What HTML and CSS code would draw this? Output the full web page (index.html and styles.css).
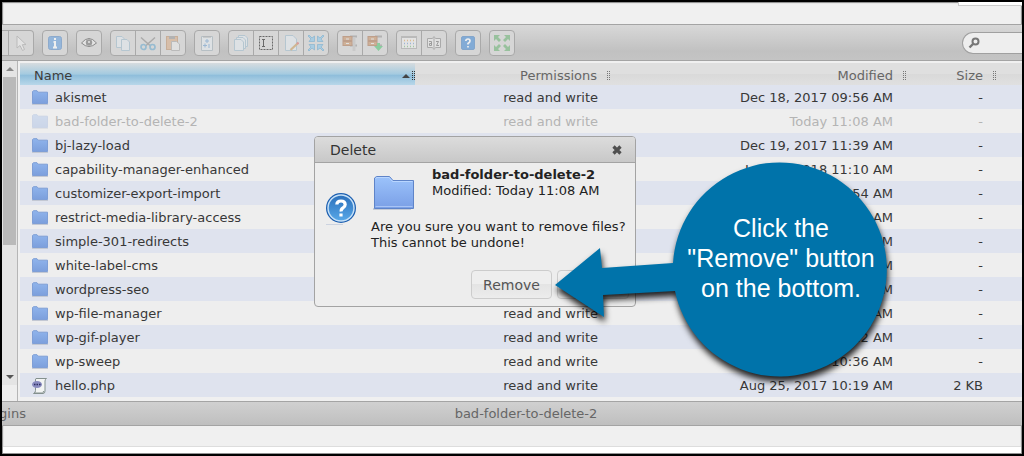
FILE: index.html
```html
<!DOCTYPE html>
<html lang="en">
<head>
<meta charset="utf-8">
<title>File manager</title>
<link rel="stylesheet" href="styles.css">
</head>
<body>
<svg class="defs" width="0" height="0" aria-hidden="true">
  <defs>
    <linearGradient id="fg" x1="0" y1="0" x2="0" y2="1"><stop offset="0" stop-color="#9cc3fb"/><stop offset="1" stop-color="#7a9fe6"/></linearGradient>
    <linearGradient id="sg" x1="0" y1="0" x2="0" y2="1"><stop offset="0" stop-color="#8fb4ec"/><stop offset="1" stop-color="#7c9fdc"/></linearGradient>
    <linearGradient id="bg" x1="0" y1="0" x2="0" y2="1"><stop offset="0" stop-color="#2a6fbb"/><stop offset="1" stop-color="#58a8e8"/></linearGradient>
    <symbol id="folder" viewBox="0 0 16 16"><path d="M.5 13.500V1.500L1.500.700H5L6.200 2.200H15.500V13.500Z" fill="url(#sg)" stroke="#7f9fd6"/><path d="M0 14.500H16" stroke="#c3c8d3"/></symbol>
    <symbol id="arrows" viewBox="0 0 16 16"><path d="M0 0H6L4 2 7 5 5 7 2 4 0 6ZM16 0V6L14 4 11 7 9 5 12 2 10 0ZM0 16V10L2 12 5 9 7 11 4 14 6 16ZM16 16H10L12 14 9 11 11 9 14 12 16 10Z"/></symbol>
  </defs>
</svg>
<div class="frame">
  <header class="topstrip"><span class="tab"></span></header>

  <div class="toolbar">
    <div class="group cut">
      <button class="tool part" aria-label="Previous tool"></button>
      <button class="tool" aria-label="Open"><svg viewBox="0 0 16 16"><path d="M4 1V13L7 10.500 9.500 15.500 11.500 14.500 9.300 9.700 13 9.500Z" fill="#f4f4f4" stroke="#999"/></svg></button>
    </div>
    <div class="group"><button class="tool strong" aria-label="Get info"><svg viewBox="0 0 16 16"><rect x="1.500" y="1.500" width="13" height="13" rx="2" fill="#6aa0dc" stroke="#5c8dc5"/><path d="M8 3V5M6.500 7H8V12M6 12.500H10" stroke="#fff" stroke-width="2" fill="none"/></svg></button></div>
    <div class="group"><button class="tool strong" aria-label="Preview"><svg viewBox="0 0 16 16"><path d="M.5 8Q8-1 15.500 8Q8 15 .5 8Z" fill="#eee" stroke="#555"/><circle cx="8" cy="7.500" r="3.200" fill="#777"/><circle cx="8" cy="7" r="1" fill="#eee"/></svg></button></div>
    <div class="group">
      <button class="tool" aria-label="Copy"><svg viewBox="0 0 16 16"><path d="M1.500 1.500H7L9.500 4V12.500H1.500Z" fill="#e6f0f7" stroke="#8fb3cb"/><path d="M6.500 4.500H12L14.500 7V15.500H6.500Z" fill="#e6f0f7" stroke="#8fb3cb"/></svg></button>
      <button class="tool" aria-label="Cut"><svg viewBox="0 0 16 16" fill="none"><path d="M1 2.500 10.500 11M15 2.500 5.500 11" stroke="#777" stroke-width="1.500"/><circle cx="3.500" cy="12" r="2.500" stroke="#4b9ccb" stroke-width="1.700"/><circle cx="12.500" cy="12" r="2.500" stroke="#4b9ccb" stroke-width="1.700"/></svg></button>
      <button class="tool" aria-label="Paste"><svg viewBox="0 0 16 16"><rect x="1.500" y="1.500" width="11" height="13" fill="#d9a273" stroke="#b97f4e"/><path d="M4 2.500H10" stroke="#888" stroke-width="3"/><path d="M6.500 6.500H11.500L14.500 9V15.500H6.500Z" fill="#eee" stroke="#999"/></svg></button>
    </div>
    <div class="group"><button class="tool" aria-label="Duplicate"><svg viewBox="0 0 16 16"><path d="M2.500 1.500H13.500V15.500H2.500Z" fill="#e6f0f7" stroke="#91a4b0"/><path d="M4 2H12" stroke="#888"/><path d="M8 4V8M6 6H10M6 8.500V12.500M4 10.500H8M10 9V13" stroke="#5694d2" fill="none"/></svg></button></div>
    <div class="group">
      <button class="tool" aria-label="Select all"><svg viewBox="0 0 16 16" fill="#e6f0f7" stroke="#8fb3cb"><path d="M5.500.500H12L14.500 3V11.500H5.500Z"/><path d="M3.500 2.500H10L12.500 5V13.500H3.500Z"/><path d="M1.500 4.500H8L10.500 7V15.500H1.500Z"/></svg></button>
      <button class="tool strong" aria-label="Rename"><svg viewBox="0 0 16 16" fill="none" stroke="#222"><rect x="1.500" y="1.500" width="13" height="13" stroke-dasharray="2 1"/><path d="M4 4.500H7M4 11.500H7M5.500 4.500V11.500"/></svg></button>
      <button class="tool" aria-label="Edit file"><svg viewBox="0 0 16 16"><path d="M2.500.500H10L13.500 4V15.500H2.500Z" fill="#e6f0f7" stroke="#8fb3cb"/><path d="M7.500 15 15 8" stroke="#c9913f" stroke-width="2.200"/><path d="M14 9 15.500 7.500" stroke="#d55" stroke-width="2.200"/></svg></button>
      <button class="tool strong" aria-label="Resize"><svg viewBox="0 0 16 16" fill="#8cc6ea" stroke="#4595c8" stroke-width=".6"><path d="M1 0 4 3 6.500 1V6.500H1L3 4 0 1ZM15 0 12 3 9.500 1V6.500H15L13 4 16 1ZM1 16 4 13 6.500 15V9.500H1L3 12 0 15ZM15 16 12 13 9.500 15V9.500H15L13 12 16 15Z"/></svg></button>
    </div>
    <div class="group">
      <button class="tool" aria-label="Extract"><svg viewBox="0 0 16 16"><path d="M8 1.500H15M8 10.500H15" stroke="#888" stroke-width="2"/><path d="M12 2V16" stroke="#bbb" stroke-width="3"/><rect x="1" y="1.500" width="9" height="4" fill="#c6844c" stroke="#a25d31"/><rect x="1" y="6.500" width="9" height="4" fill="#c6844c" stroke="#a25d31"/><path d="M4 4H7M4 8.500H7" stroke="#eee"/></svg></button>
      <button class="tool" aria-label="Archive"><svg viewBox="0 0 16 16"><path d="M8 1.500H15M8 10.500H15" stroke="#888" stroke-width="2"/><rect x="1" y="1.500" width="9" height="4" fill="#c6844c" stroke="#a25d31"/><rect x="1" y="6.500" width="9" height="4" fill="#c6844c" stroke="#a25d31"/><path d="M4 4H7M4 8.500H7" stroke="#eee"/><path d="M10 8H13V11H16L11.500 16 7 11H10Z" fill="#2fc05c"/></svg></button>
    </div>
    <div class="group">
      <button class="tool" aria-label="Icons view"><svg viewBox="0 0 16 16"><rect x=".5" y="1.500" width="15" height="12" fill="#f4f4f4" stroke="#999"/><path d="M1 2.500H15" stroke="#999"/><g fill="none" stroke-dasharray="1 2" stroke-width="1.300"><path d="M3 5.500H14" stroke="#e0993e"/><path d="M3 8.500H14" stroke="#5b8ed0"/><path d="M3 11.500H14" stroke="#64b564"/></g></svg></button>
      <button class="tool" aria-label="Sort"><svg viewBox="0 0 16 16"><path d="M1.500 3.500H6.500L8 1.500 9.500 3.500H14.500V12.500H9.500L8 14.500 6.500 12.500H1.500Z" fill="#eee" stroke="#777"/><path d="M8 3V13" stroke="#777"/><path d="M3 6.500H5.500V10.500H3.500V8.500H5.500M10 6.500H12.500L10.500 10.500H13" fill="none" stroke="#555"/></svg></button>
    </div>
    <div class="group"><button class="tool strong" aria-label="Help"><svg viewBox="0 0 16 16"><rect x="1.500" y="1.500" width="13" height="13" rx="1.500" fill="#4b8fd6" stroke="#4f87c4"/><path d="M5.800 6Q6 4 8 4T10 6Q10 7.300 8 8.500V9.500M8 11V12.500" fill="none" stroke="#fff" stroke-width="1.700"/></svg></button></div>
    <div class="group"><button class="tool" aria-label="Full screen"><svg viewBox="0 0 16 16" fill="#4ea95a"><use href="#arrows"/></svg></button></div>
    <div class="search">
      <svg viewBox="0 0 12 12" fill="none" stroke="#777" stroke-width="2"><circle cx="7.500" cy="4.500" r="3"/><path d="M5 7 1.500 10.500" stroke-width="2.400"/></svg>
      <input type="text" aria-label="Search">
    </div>
  </div>

  <div class="work">
    <nav class="tree" aria-label="Folders">
      <div class="scroll"><span class="up"></span><span class="thumb"></span><span class="down"></span></div>
    </nav>
    <main class="list">
      <table>
        <colgroup><col><col class="cperm"><col class="cmod"><col class="csize"><col class="cend"></colgroup>
        <thead><tr>
          <th class="sorted"><div><span class="label">Name</span><i class="asc"></i><i class="grip"></i></div></th>
          <th><div>Permissions<i class="grip"></i></div></th>
          <th><div>Modified<i class="grip"></i></div></th>
          <th><div>Size<i class="grip"></i></div></th>
          <th></th>
        </tr></thead>
        <tbody>
          <tr><td><svg class="ico"><use href="#folder"/></svg>akismet</td><td>read and write</td><td>Dec 18, 2017 09:56 AM</td><td>-</td><td></td></tr>
          <tr class="faded"><td><svg class="ico"><use href="#folder"/></svg>bad-folder-to-delete-2</td><td>read and write</td><td>Today 11:08 AM</td><td>-</td><td></td></tr>
          <tr><td><svg class="ico"><use href="#folder"/></svg>bj-lazy-load</td><td>read and write</td><td>Dec 19, 2017 11:39 AM</td><td>-</td><td></td></tr>
          <tr><td><svg class="ico"><use href="#folder"/></svg>capability-manager-enhanced</td><td></td><td>Jan 05, 2018 11:10 AM</td><td>-</td><td></td></tr>
          <tr><td><svg class="ico"><use href="#folder"/></svg>customizer-export-import</td><td></td><td>09:54 AM</td><td>-</td><td></td></tr>
          <tr><td><svg class="ico"><use href="#folder"/></svg>restrict-media-library-access</td><td></td><td>AM</td><td>-</td><td></td></tr>
          <tr><td><svg class="ico"><use href="#folder"/></svg>simple-301-redirects</td><td></td><td>AM</td><td>-</td><td></td></tr>
          <tr><td><svg class="ico"><use href="#folder"/></svg>white-label-cms</td><td></td><td>AM</td><td>-</td><td></td></tr>
          <tr><td><svg class="ico"><use href="#folder"/></svg>wordpress-seo</td><td></td><td>AM</td><td>-</td><td></td></tr>
          <tr><td><svg class="ico"><use href="#folder"/></svg>wp-file-manager</td><td>read and write</td><td>AM</td><td>-</td><td></td></tr>
          <tr><td><svg class="ico"><use href="#folder"/></svg>wp-gif-player</td><td>read and write</td><td>10:22 AM</td><td>-</td><td></td></tr>
          <tr><td><svg class="ico"><use href="#folder"/></svg>wp-sweep</td><td>read and write</td><td>10:36 AM</td><td>-</td><td></td></tr>
          <tr><td><svg class="ico" viewBox="0 0 16 16"><path d="M4 .5H14.500Q13 1.500 13 3V13Q13 15.500 11 15.500H1.500Q3.500 15 3.500 12.500V2Q3.500.500 4 .5Z" fill="#f2f4f3" stroke="#84918e"/><path d="M2 15H10.500Q11.500 14.500 11.500 13" stroke="#84918e" fill="none"/><ellipse cx="5" cy="6.500" rx="5" ry="3.500" fill="#8a8cc0"/><path d="M2 6.500H8.500" stroke="#2e2e62" stroke-width="1.500" stroke-dasharray="1.500 1"/></svg>hello.php</td><td>read and write</td><td>Aug 25, 2017 10:19 AM</td><td>2 KB</td><td></td></tr>
        </tbody>
      </table>
    </main>
  </div>

  <footer class="status"><div class="path"><span>plugins</span></div><div class="selected">bad-folder-to-delete-2</div></footer>
  <div class="below"></div>

  <section class="dialog" role="dialog" aria-labelledby="dlg-title">
    <div class="titlebar"><span id="dlg-title">Delete</span>
      <button class="close" aria-label="Close"><svg viewBox="0 0 10 10"><path d="M1.500 1.500 8.500 8.500M8.500 1.500 1.500 8.500" stroke="#4f4f4f" stroke-width="3.200"/></svg></button>
    </div>
    <div class="content">
      <svg class="ask" viewBox="0 0 32 34"><path d="M1 32.500H18" stroke="#ccd3e0"/><circle cx="16" cy="16" r="15" fill="#1c5fb0"/><circle cx="16" cy="16" r="13" fill="url(#bg)" stroke="#c5e0f7" stroke-width="1.500"/><path d="M11.800 12.500Q12 9 16 9T20.200 12.500Q20.200 14.500 18 15.800T16.200 19.500M16 21.500V24.500" fill="none" stroke="#fff" stroke-width="3.200"/></svg>
      <div class="message">
        <div class="file">
          <svg class="big" viewBox="0 0 42 36"><path d="M0 34H38" stroke="#c4cad6" stroke-width="2"/><path d="M1.500 33.500V3L3.500 1.500H16.500L20 5.500H40.500V33.500Z" fill="url(#fg)" stroke="#5f84c8"/><path d="M2.500 31.500H39.500" stroke="#a8c4f5"/><path d="M2.500 3.500 4 2.500H16L19.500 6.500H39.500" fill="none" stroke="#b9d6ff"/></svg>
          <p><strong>bad-folder-to-delete-2</strong><br>Modified: Today 11:08 AM</p>
        </div>
        <p>Are you sure you want to remove files?<br>This cannot be undone!</p>
      </div>
    </div>
    <div class="actions"><button>Remove</button><button aria-label="Cancel"></button></div>
  </section>

  <aside class="callout">
    <svg viewBox="0 0 350 240" aria-hidden="true"><path d="M10 132 55 95 57 115 128 110A107 107 0 1 1 130 138L58 142 59 164Z" fill="#0073aa"/></svg>
    <p>Click the<br>"Remove" button<br>on the bottom.</p>
  </aside>
</div>
</body>
</html>
```
FILE: styles.css
```css
* { box-sizing: border-box; }
body {
  margin: 0;
  font: 13px/16px "DejaVu Sans", sans-serif;
  color: #383838;
}
p { margin: 0; }
button, input { font: inherit; color: inherit; padding: 0; margin: 0; }
.defs { position: absolute; }

.frame {
  position: relative;
  display: flex;
  flex-direction: column;
  min-height: 100vh;
  border: 2px solid #000;
  background: #f0f0f0;
  box-shadow: inset 0 0 1px 1px #888;
  overflow: hidden;
}
.topstrip { height: 22px; display: flex; justify-content: flex-end; }
.tab { width: 64px; height: 4px; background: #fff; border: 1px solid #ccc; border-top: 0; border-right: 0; }

.toolbar {
  display: flex;
  align-items: center;
  gap: 8px;
  height: 37px;
  border-top: 1px solid #a4a4a4;
  border-bottom: 1px solid #a4a4a4;
  background: linear-gradient(#d8d8d8, #c1c1c1 75%, #c4c4c4);
}
.group {
  display: flex;
  flex: none;
  border: 1px solid #a9a9a9;
  border-radius: 4px;
  background: #d6d6d6;
  overflow: hidden;
}
.group.cut { border-left: 0; border-radius: 0 4px 4px 0; }
.tool { display: block; width: 24px; height: 24px; border: 0; background: none; }
.tool + .tool { width: 25px; border-left: 1px solid #a9a9a9; }
.tool.part { width: 6px; }
.tool svg { display: block; width: 16px; height: 16px; margin: 0 auto; opacity: .45; }
.tool.strong svg { opacity: .6; }
.search {
  display: flex;
  align-items: center;
  gap: 4px;
  width: 60px;
  height: 22px;
  margin-left: auto;
  padding-left: 5px;
  border: 1px solid #a0a0a0;
  border-right: 0;
  border-radius: 11px 0 0 11px;
  background: #eee;
}
.search svg { width: 12px; height: 12px; flex: none; }
.search input { min-width: 0; flex: 1; border: 0; background: none; outline: 0; }

.work { display: flex; height: 340px; flex: none; }
.tree { width: 16px; border-right: 1px solid #b5b5b5; flex: none; background: #eee; }
.scroll { display: flex; flex-direction: column; align-items: center; width: 15px; height: 324px; padding: 6px 0; background: #e4e4e4; }
.up, .down { border: 4px solid transparent; border-top: 0; border-bottom-color: #888; }
.down { border-top: 4px solid #555; border-bottom: 0; margin-top: auto; }
.thumb { width: 13px; height: 168px; margin-top: 6px; background: #b9b9b9; }

.list { flex: 1; min-width: 0; padding: 2px 0 4px 2px; background: #f0f0f0; }
table { width: 100%; border-collapse: collapse; table-layout: fixed; }
.cperm { width: 195px; }
.cmod { width: 296px; }
.csize { width: 90px; }
.cend { width: 26px; }
th { height: 22px; padding: 0; font-weight: normal; color: #666; background: linear-gradient(#dfdfdf 50%, #d9d9d9 50%, #e0e0e0); }
th div { display: flex; align-items: center; justify-content: flex-end; gap: 10px; padding-top: 4px; }
th.sorted { color: #3d3d3d; background: linear-gradient(#d6dcdf, #a3cae0 52%, #8cbcda 53%, #b8d7e9); }
th.sorted div { gap: 2px; padding-left: 14px; }
.label { margin-right: auto; }
.asc { border: 4px solid transparent; border-top: 0; border-bottom-color: #444; }
.grip { display: flex; justify-content: space-between; width: 3px; height: 10px; }
.grip::before, .grip::after { content: ""; width: 1px; background: repeating-linear-gradient(#777 0 1px, transparent 1px 2px); }
.sorted .grip::before, .sorted .grip::after { background: repeating-linear-gradient(#333 0 1px, transparent 1px 2px); }
td { height: 24px; padding: 2px 13px 0 0; text-align: right; white-space: nowrap; }
td:first-child { padding: 2px 0 0 12px; text-align: left; }
td:nth-child(2) { padding-right: 12px; }
td:last-child { padding: 0; }
tbody tr { background: #eee; }
tbody tr:nth-child(odd) { background: #dfe3ee; }
.ico { width: 16px; height: 16px; margin-right: 7px; vertical-align: -4px; }
.faded { color: #b4b4b4; }
.faded .ico { opacity: .3; }

.status {
  display: flex;
  align-items: center;
  height: 25px;
  flex: none;
  border-top: 1px solid #a4a4a4;
  border-bottom: 1px solid #a4a4a4;
  background: linear-gradient(#d0d0d0, #bfbfbf);
  color: #666;
}
.path { display: flex; justify-content: flex-end; width: 24px; overflow: hidden; }
.selected { flex: 1; padding-left: 4px; text-align: center; }
.below { flex: 1; margin: 20px 1px 1px; min-height: 7px; background: #fff; border-top: 1px solid #ddd; }

.dialog {
  position: absolute;
  left: 312px;
  top: 134px;
  width: 322px;
  border: 1px solid #a3a3a3;
  border-radius: 4px;
  background: #ededed;
  color: #222;
  overflow: hidden;
}
.titlebar {
  display: flex;
  align-items: center;
  justify-content: space-between;
  height: 26px;
  padding: 0 13px 0 15px;
  border-bottom: 1px solid #a3a3a3;
  background: linear-gradient(#dcdcdc, #c8c8c8);
  color: #333;
  font-size: 14px;
}
.close { border: 0; background: none; }
.close svg { display: block; width: 10px; height: 10px; }
.content { display: flex; align-items: center; gap: 14px; padding: 4px 0 0 10px; }
.ask { width: 32px; height: 34px; flex: none; }
.message { white-space: nowrap; }
.file { display: flex; gap: 17px; height: 52px; padding-left: 2px; }
.big { width: 42px; height: 36px; margin-top: 8px; }
.actions { display: flex; justify-content: flex-end; gap: 5px; padding: 19px 6px 7px; }
.actions button {
  width: 81px;
  height: 29px;
  border: 1px solid #ccc;
  border-radius: 4px;
  background: linear-gradient(#eee 50%, #e4e4e4 50%, #ececec);
  font-size: 14px;
  color: #555;
}
.actions button + button { width: 72px; }

.callout { position: absolute; left: 543px; top: 151px; width: 350px; color: #fff; }
.callout svg { display: block; width: 350px; height: 240px; filter: drop-shadow(1px 5px 3px #000d); }
.callout p {
  position: absolute;
  left: 128px;
  top: 60px;
  width: 216px;
  text-align: center;
  font: 25px/30px "Liberation Sans", Arial, sans-serif;
}
```
